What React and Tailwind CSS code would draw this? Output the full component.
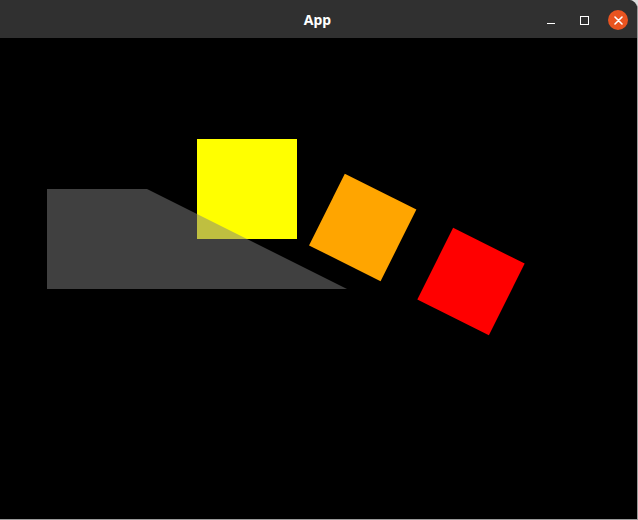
import React from 'react';

export default function App() {
  return (
    <div className="w-[638px] h-[520px] bg-[#dcdcdc] overflow-hidden">
      <div className="w-full h-full flex flex-col bg-black rounded-tr-[9px] overflow-hidden border-r border-b border-[#9a9a9a]">

        {/* ── TITLE BAR ── */}
        <div className="h-[38px] shrink-0 bg-[#303030] flex items-center relative">
          <div className="flex-1 text-center text-white text-[14px] font-bold font-['Noto_Sans',sans-serif] pr-[2px]">
            App
          </div>
          <div className="absolute right-[3px] top-[1px] h-full flex items-center">
            <div className="w-[32px] h-[32px] flex items-center justify-center">
              <div className="w-[8px] h-px bg-white mt-[6px] mr-[6px]" />
            </div>
            <div className="w-[32px] h-[32px] flex items-center justify-center">
              <div className="w-[9px] h-[9px] border border-white mr-[3px]" />
            </div>
            <div className="w-[32px] h-[32px] flex items-center justify-center">
              <div className="w-[20px] h-[20px] rounded-full bg-[#e95420] flex items-center justify-center">
                <svg width="9" height="9" viewBox="0 0 9 9">
                  <path d="M1 1 L8 8 M8 1 L1 8" stroke="white" strokeWidth="1.6" strokeLinecap="round" />
                </svg>
              </div>
            </div>
          </div>
        </div>

        {/* ── CANVAS ── */}
        <div className="flex-1 bg-black">
          <svg width="637" height="481" viewBox="0 0 637 481">
            <rect x="197" y="101" width="100" height="100" fill="#ffff00" />
            <polygon points="47,151 147,151 347,251 47,251" fill="rgba(128,128,128,0.5)" />
            <rect x="-40" y="-40" width="80" height="80" fill="#ffa500" transform="translate(362.7 189.5) rotate(26.57)" />
            <rect x="-40" y="-40" width="80" height="80" fill="#ff0000" transform="translate(471 243.5) rotate(26.57)" />
          </svg>
        </div>
      </div>
    </div>
  );
}
